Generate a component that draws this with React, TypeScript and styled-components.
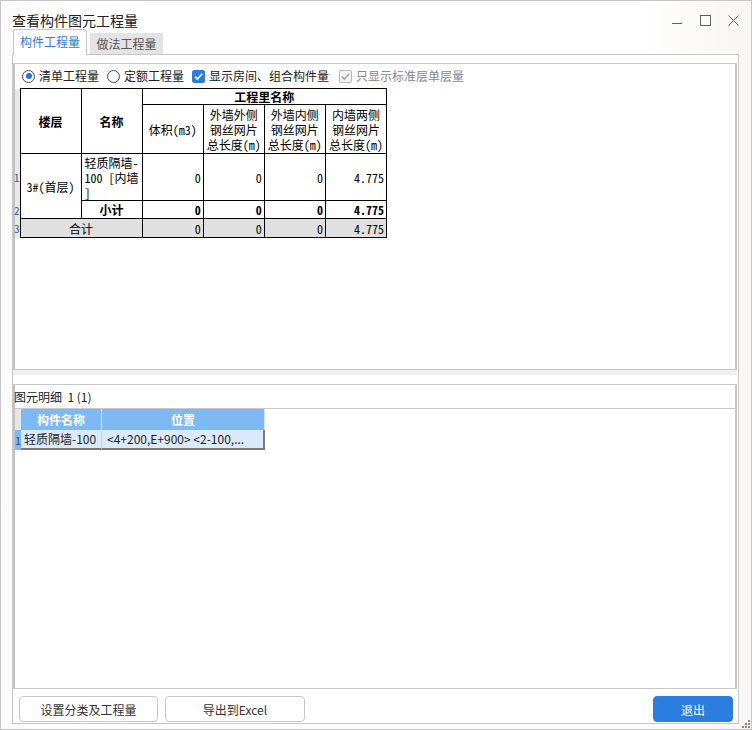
import React from "react";
import styled, { createGlobalStyle } from "styled-components";

const Global = createGlobalStyle`
  html, body { margin: 0; padding: 0; background: #ffffff; }
  body { font-family: "Noto Sans CJK SC", "Noto Sans", sans-serif; }
  * { box-sizing: border-box; }
`;

const Window = styled.div`
  position: relative;
  width: 752px;
  height: 730px;
  border: 1px solid #c6c6c6;
  background: linear-gradient(90deg, #fbfbfc 0%, #ffffff 20%, #ffffff 85%, #f8f6f4 100%);
  display: flex;
  flex-direction: column;
  font-family: "Noto Sans CJK SC", "Noto Sans", sans-serif;
  color: #222;
`;

const TitleBar = styled.div`
  height: 28px;
  padding: 10px 4px 0 11px;
  display: flex;
  align-items: center;
`;

const Title = styled.div`
  flex: 1;
  font-size: 14px;
  line-height: 18px;
  color: #222;
`;

const Ctrl = styled.div`
  width: 28px;
  height: 18px;
  display: flex;
  align-items: center;
  justify-content: center;
`;

const TabStrip = styled.div`
  height: 25px;
  display: flex;
  align-items: flex-end;
  padding-left: 12px;
  gap: 3px;
  position: relative;
  z-index: 1;
`;

const Tab = styled.div<{ $active?: boolean }>`
  height: ${(p) => (p.$active ? 26 : 21)}px;
  width: ${(p) => (p.$active ? 74 : 73)}px;
  margin-bottom: ${(p) => (p.$active ? -1 : 0)}px;
  background: ${(p) => (p.$active ? "#ffffff" : "#e3e3e3")};
  border: ${(p) => (p.$active ? "1px solid #c8c8c8" : "none")};
  border-bottom: none;
  border-radius: ${(p) => (p.$active ? "3px 3px 0 0" : "0")};
  color: ${(p) => (p.$active ? "#2b7be0" : "#555")};
  font-size: 12px;
  line-height: ${(p) => (p.$active ? 24 : 22)}px;
  text-align: center;
`;

const Pane = styled.div`
  flex: 1;
  margin: 0 12px 5px 11px;
  border: 1px solid #c8c8c8;
  background: #ffffff;
  padding-top: 8px;
  display: flex;
  flex-direction: column;
`;

const Panel = styled.div<{ $grow?: boolean }>`
  ${(p) => (p.$grow ? "flex: 1;" : "height: 307px;")}
  margin-right: 1px;
  border-top: 1px solid #c8c8c8;
  border-bottom: 1px solid #c8c8c8;
  border-left: 2px solid #c2c2c2;
  border-right: 2px solid #c8c8c8;
  background: #ffffff;
  display: flex;
  flex-direction: column;
`;

const Splitter = styled.div`
  height: 14px;
  margin-right: 1px;
  background: linear-gradient(180deg, #efefef 0, #efefef 5px, #ffffff 5px);
`;

const Options = styled.div`
  height: 24px;
  display: flex;
  align-items: center;
  padding-left: 7px;
  font-size: 12px;
  color: #222;
`;

const Option = styled.label<{ $disabled?: boolean; $gap?: number }>`
  display: flex;
  align-items: center;
  gap: 4px;
  margin-right: ${(p) => p.$gap ?? 8}px;
  color: ${(p) => (p.$disabled ? "#8a8a8a" : "#222")};
  line-height: 16px;
`;

const Radio = styled.span<{ $checked?: boolean }>`
  width: 13px;
  height: 13px;
  border-radius: 50%;
  border: 1px solid #4a4a4a;
  background: #fff;
  display: flex;
  align-items: center;
  justify-content: center;
  &::after {
    content: "";
    width: 6px;
    height: 6px;
    border-radius: 50%;
    background: ${(p) => (p.$checked ? "#1f72e6" : "transparent")};
  }
`;

const Check = styled.span<{ $disabled?: boolean }>`
  width: 13px;
  height: 13px;
  border-radius: 2px;
  background: ${(p) => (p.$disabled ? "#f4f4f4" : "#2b7de0")};
  border: 1px solid ${(p) => (p.$disabled ? "#b8b8b8" : "#2b7de0")};
  display: flex;
  align-items: center;
  justify-content: center;
`;

const QtyTable = styled.table`
  border-collapse: collapse;
  table-layout: fixed;
  width: 372px;
  font-family: "Noto Sans Mono CJK SC", "Noto Sans CJK SC", monospace;
  font-size: 12px;
  line-height: 15px;
  color: #000;
`;

const NumCol = styled.col`
  width: 5px;
`;
const DataCol = styled.col`
  width: 61px;
`;

const QRow = styled.tr<{ $h: number; $total?: boolean }>`
  height: ${(p) => p.$h}px;
  background: ${(p) => (p.$total ? "#e0e0e0" : "#ffffff")};
`;

const RowNum = styled.td`
  padding: 0;
  border: none;
  background: #e8e8e8;
  color: #2c5fb8;
  font-size: 11px;
  line-height: 12px;
  text-indent: -1px;
  overflow: visible;
  white-space: nowrap;
  vertical-align: middle;
`;

const Cell = styled.td<{ $align?: "left" | "right" | "center"; $bold?: boolean }>`
  border: 1px solid #000;
  padding: ${(p) => (p.$align === "left" ? "0 0 0 3px" : p.$align === "right" ? "0 2px 0 0" : "0")};
  text-align: ${(p) => p.$align ?? "center"};
  vertical-align: middle;
  font-weight: ${(p) => (p.$bold ? 700 : 400)};
  white-space: nowrap;
  overflow: hidden;
`;

const LowerLabel = styled.div`
  height: 24px;
  border-bottom: 1px solid #c8c8c8;
  margin-left: -1px;
  font-size: 12px;
  line-height: 23px;
  color: #222;
  white-space: pre;
`;

const DetailTable = styled.table`
  border-collapse: separate;
  border-spacing: 0;
  table-layout: fixed;
  width: 250px;
  font-size: 12px;
  font-family: "Noto Sans CJK SC", sans-serif;
`;

const DNumCol = styled.col`
  width: 6px;
`;
const DNameCol = styled.col`
  width: 81px;
`;
const DPosCol = styled.col`
  width: 163px;
`;

const DHead = styled.td<{ $blank?: boolean }>`
  height: 21px;
  padding: 0;
  background: ${(p) => (p.$blank ? "#e6e6e6" : "#7db9f5")};
  color: #fff;
  font-weight: 700;
  text-align: center;
  border-right: 1px solid ${(p) => (p.$blank ? "#e6e6e6" : "#d2e6fa")};
  line-height: 20px;
`;

const DNum = styled.td`
  height: 20px;
  padding: 0;
  background: #7db9f5;
  color: #1a4f9e;
  font-size: 11px;
  line-height: 18px;
  text-align: center;
`;

const DCell = styled.td<{ $last?: boolean; $pad: number }>`
  height: 20px;
  padding: 0 0 0 ${(p) => p.$pad}px;
  background: #dbeafb;
  color: #1e1e1e;
  white-space: nowrap;
  overflow: hidden;
  line-height: 18px;
  border-bottom: 2px solid #7a7a7a;
  border-right: ${(p) => (p.$last ? "2px solid #7a7a7a" : "1px solid #b9d3ef")};
`;

const ButtonRow = styled.div`
  height: 34px;
  padding: 7px 5px 0 6px;
  display: flex;
  gap: 7px;
`;

const Button = styled.button<{ $w: number; $primary?: boolean }>`
  width: ${(p) => p.$w}px;
  height: 26px;
  border-radius: 4px;
  border: 1px solid ${(p) => (p.$primary ? "#2b7de0" : "#c8c8c8")};
  background: ${(p) => (p.$primary ? "#2b7de0" : "#ffffff")};
  color: ${(p) => (p.$primary ? "#ffffff" : "#333")};
  font-family: "Noto Sans CJK SC", sans-serif;
  font-size: 12px;
  padding: 0;
  ${(p) => (p.$primary ? "margin-left: auto;" : "")}
`;

const Grip = styled.svg`
  position: absolute;
  right: 0;
  bottom: 0;
`;

const CheckMark = ({ color }: { color: string }) => (
  <svg width="11" height="11" viewBox="0 0 11 11">
    <path d="M2 5.6 L4.4 8 L9.2 2.8" fill="none" stroke={color} strokeWidth="1.6" />
  </svg>
);

export default function App() {
  return (
    <>
      <Global />
      <Window>
        <TitleBar>
          <Title>查看构件图元工程量</Title>
          <Ctrl>
            <svg width="11" height="11" viewBox="0 0 11 11">
              <path d="M0 8.5 H10" stroke="#606060" strokeWidth="1" />
            </svg>
          </Ctrl>
          <Ctrl>
            <svg width="11" height="11" viewBox="0 0 11 11">
              <rect x="0.5" y="0.5" width="10" height="10" fill="none" stroke="#606060" strokeWidth="1" />
            </svg>
          </Ctrl>
          <Ctrl>
            <svg width="11" height="11" viewBox="0 0 11 11">
              <path d="M0.5 0.5 L10.5 10.5 M10.5 0.5 L0.5 10.5" stroke="#606060" strokeWidth="1" />
            </svg>
          </Ctrl>
        </TitleBar>

        <TabStrip>
          <Tab $active>构件工程量</Tab>
          <Tab>做法工程量</Tab>
        </TabStrip>

        <Pane>
          <Panel>
            <Options>
              <Option>
                <Radio $checked />
                清单工程量
              </Option>
              <Option>
                <Radio />
                定额工程量
              </Option>
              <Option $gap={10}>
                <Check>
                  <CheckMark color="#ffffff" />
                </Check>
                显示房间、组合构件量
              </Option>
              <Option $disabled>
                <Check $disabled>
                  <CheckMark color="#a8a8a8" />
                </Check>
                只显示标准层单层量
              </Option>
            </Options>

            <QtyTable>
              <colgroup>
                <NumCol />
                <DataCol />
                <DataCol />
                <DataCol />
                <DataCol />
                <DataCol />
                <DataCol />
              </colgroup>
              <tbody>
                <QRow $h={16}>
                  <RowNum />
                  <Cell rowSpan={2} $bold>
                    楼层
                  </Cell>
                  <Cell rowSpan={2} $bold>
                    名称
                  </Cell>
                  <Cell colSpan={4} $bold>
                    工程里名称
                  </Cell>
                </QRow>
                <QRow $h={49}>
                  <RowNum />
                  <Cell>体积(m3)</Cell>
                  <Cell>
                    外墙外侧
                    <br />
                    钢丝网片
                    <br />
                    总长度(m)
                  </Cell>
                  <Cell>
                    外墙内侧
                    <br />
                    钢丝网片
                    <br />
                    总长度(m)
                  </Cell>
                  <Cell>
                    内墙两侧
                    <br />
                    钢丝网片
                    <br />
                    总长度(m)
                  </Cell>
                </QRow>
                <QRow $h={47}>
                  <RowNum>1</RowNum>
                  <Cell rowSpan={2}>3#(首层)</Cell>
                  <Cell $align="left">
                    轻质隔墙-
                    <br />
                    100 [内墙
                    <br />]
                  </Cell>
                  <Cell $align="right">0</Cell>
                  <Cell $align="right">0</Cell>
                  <Cell $align="right">0</Cell>
                  <Cell $align="right">4.775</Cell>
                </QRow>
                <QRow $h={18}>
                  <RowNum>2</RowNum>
                  <Cell $bold>小计</Cell>
                  <Cell $align="right" $bold>
                    0
                  </Cell>
                  <Cell $align="right" $bold>
                    0
                  </Cell>
                  <Cell $align="right" $bold>
                    0
                  </Cell>
                  <Cell $align="right" $bold>
                    4.775
                  </Cell>
                </QRow>
                <QRow $h={19} $total>
                  <RowNum>3</RowNum>
                  <Cell colSpan={2}>合计</Cell>
                  <Cell $align="right">0</Cell>
                  <Cell $align="right">0</Cell>
                  <Cell $align="right">0</Cell>
                  <Cell $align="right">4.775</Cell>
                </QRow>
              </tbody>
            </QtyTable>
          </Panel>

          <Splitter />

          <Panel $grow>
            <LowerLabel>{"图元明细  1 (1)"}</LowerLabel>
            <DetailTable>
              <colgroup>
                <DNumCol />
                <DNameCol />
                <DPosCol />
              </colgroup>
              <tbody>
                <tr>
                  <DHead $blank />
                  <DHead>构件名称</DHead>
                  <DHead>位置</DHead>
                </tr>
                <tr>
                  <DNum>1</DNum>
                  <DCell $pad={3}>轻质隔墙-100</DCell>
                  <DCell $pad={5} $last>
                    {"<4+200,E+900> <2-100,..."}
                  </DCell>
                </tr>
              </tbody>
            </DetailTable>
          </Panel>

          <ButtonRow>
            <Button $w={139}>设置分类及工程量</Button>
            <Button $w={140}>导出到Excel</Button>
            <Button $w={80} $primary>
              退出
            </Button>
          </ButtonRow>
        </Pane>

        <Grip width="11" height="11" viewBox="0 0 11 11">
          <rect x="8" y="2" width="2" height="2" fill="#8a8a8a" />
          <rect x="5" y="5" width="2" height="2" fill="#8a8a8a" />
          <rect x="8" y="5" width="2" height="2" fill="#8a8a8a" />
          <rect x="2" y="8" width="2" height="2" fill="#8a8a8a" />
          <rect x="5" y="8" width="2" height="2" fill="#8a8a8a" />
          <rect x="8" y="8" width="2" height="2" fill="#8a8a8a" />
        </Grip>
      </Window>
    </>
  );
}
